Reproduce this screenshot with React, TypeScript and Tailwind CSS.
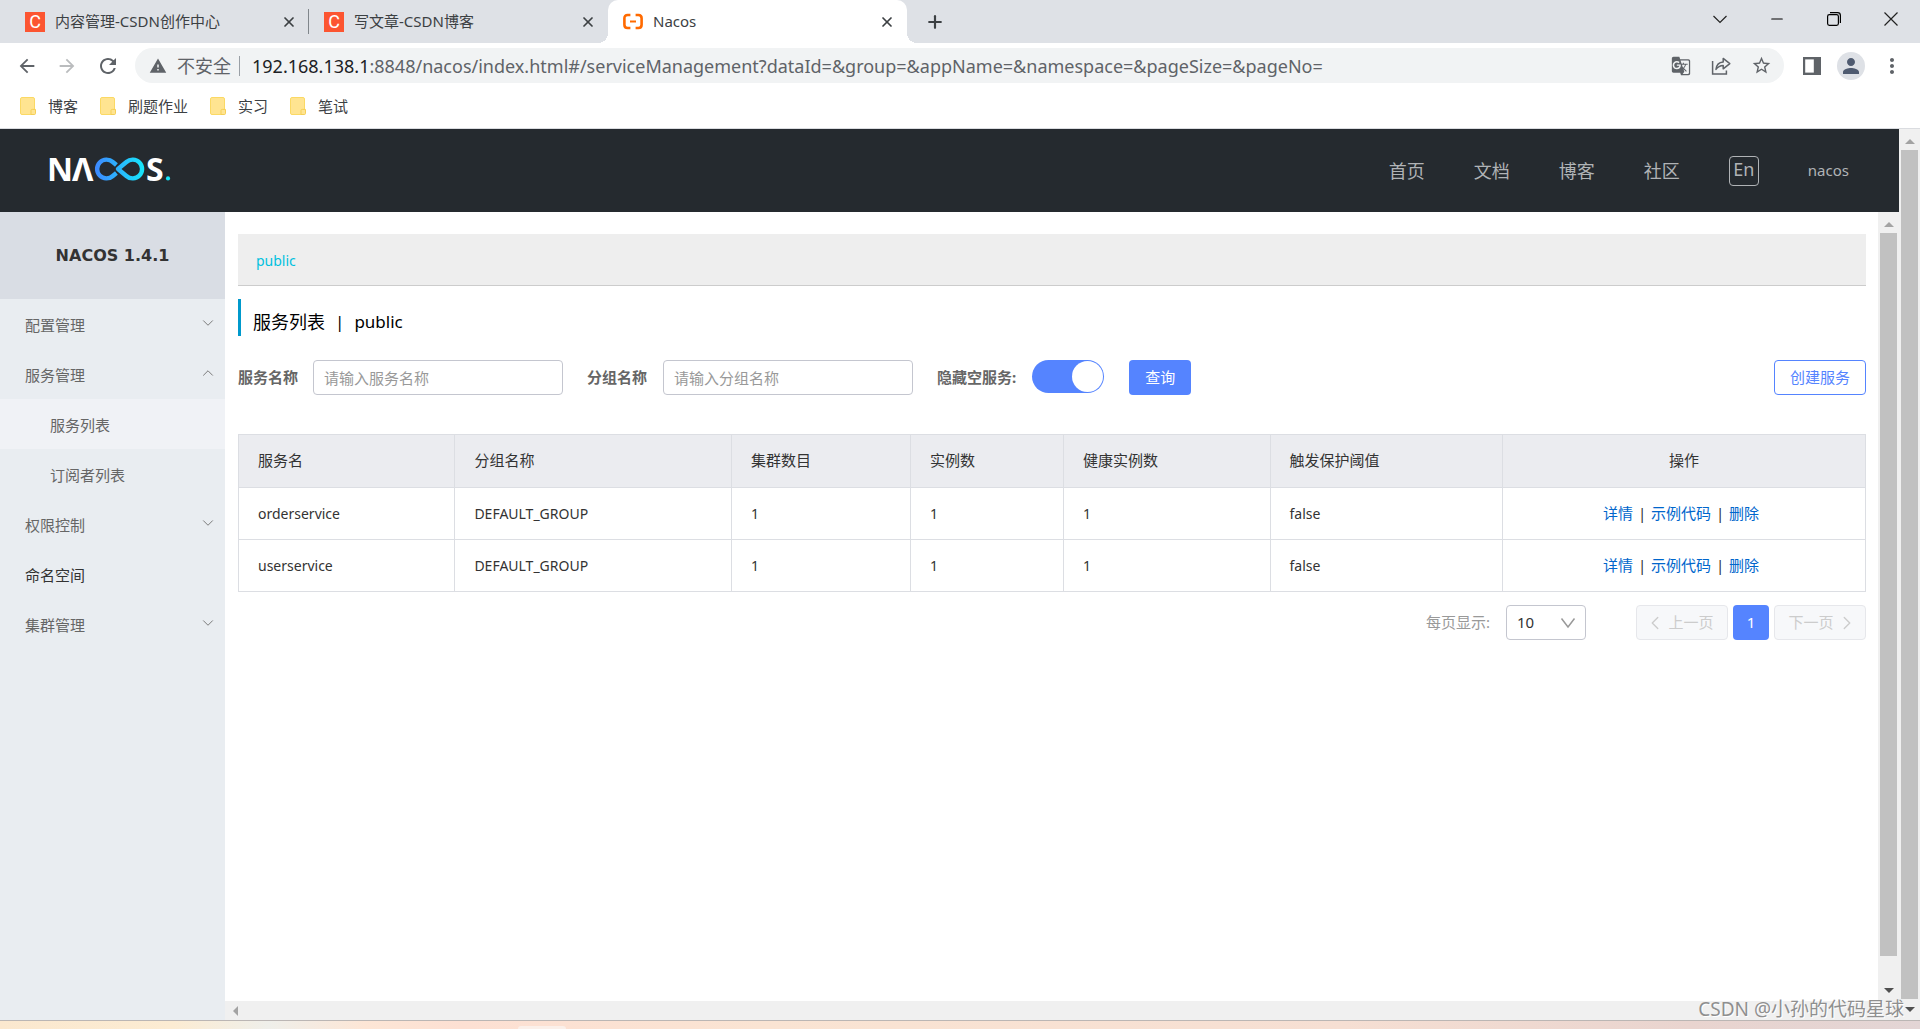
import type { ReactNode } from "react";
import { ChevronDown, ChevronLeft, ChevronRight, ChevronUp, Minus, Plus, X } from "lucide-react";
import {
  MdArrowBack,
  MdArrowForward,
  MdGTranslate,
  MdMoreVert,
  MdPerson,
  MdRefresh,
  MdStarBorder,
  MdWarning,
} from "react-icons/md";

type MenuItem = {
  label: string;
  state?: "open" | "closed";
  child?: boolean;
  active?: boolean;
  strong?: boolean;
};

const bookmarks = ["博客", "刷题作业", "实习", "笔试"];

const navLinks = ["首页", "文档", "博客", "社区"];

const menu: MenuItem[] = [
  { label: "配置管理", state: "closed" },
  { label: "服务管理", state: "open" },
  { label: "服务列表", child: true, active: true },
  { label: "订阅者列表", child: true },
  { label: "权限控制", state: "closed" },
  { label: "命名空间", strong: true },
  { label: "集群管理", state: "closed" },
];

const columns = [
  { title: "服务名", width: "w-[13.3%]" },
  { title: "分组名称", width: "w-[17%]" },
  { title: "集群数目", width: "w-[11%]" },
  { title: "实例数", width: "w-[9.4%]" },
  { title: "健康实例数", width: "w-[12.7%]" },
  { title: "触发保护阈值", width: "w-[14.3%]" },
];

const services = [
  { name: "orderservice", group: "DEFAULT_GROUP", clusters: 1, instances: 1, healthy: 1, threshold: "false" },
  { name: "userservice", group: "DEFAULT_GROUP", clusters: 1, instances: 1, healthy: 1, threshold: "false" },
];

const rowActions = ["详情", "示例代码", "删除"];

function CsdnIcon() {
  return (
    <span className="flex size-5 shrink-0 items-center justify-center bg-[#fc5531] font-['Roboto',sans-serif] text-lg leading-5 text-white">
      C
    </span>
  );
}

function NacosIcon() {
  return (
    <svg viewBox="0 0 20 20" className="size-5 shrink-0" fill="none" stroke="#ff6a00" strokeWidth="2.6">
      <path d="M7.4 3H4.6Q1.4 3 1.4 6.2V12.8Q1.4 16 4.6 16H7.4" />
      <path d="M12.6 3H15.4Q18.6 3 18.6 6.2V12.8Q18.6 16 15.4 16H12.6" />
      <path d="M7 9.5H13" strokeWidth="2" />
    </svg>
  );
}

type TabProps = { title: string; icon: ReactNode; active?: boolean };

function BrowserTab({ title, icon, active }: TabProps) {
  return (
    <div
      className={
        active
          ? "relative flex h-full w-[299px] items-center gap-2.5 rounded-t-[10px] bg-white pr-3 pl-[15px]"
          : "relative flex h-full w-[299px] items-center gap-2.5 pr-3 pl-[15px]"
      }
    >
      {active && (
        <>
          <span className="absolute bottom-0 -left-2.5 size-2.5 bg-[radial-gradient(circle_at_0_0,#dee1e6_10px,#fff_10px)]" />
          <span className="absolute -right-2.5 bottom-0 size-2.5 bg-[radial-gradient(circle_at_100%_0,#dee1e6_10px,#fff_10px)]" />
        </>
      )}
      {icon}
      <span className="flex-1 truncate text-[#3c4043]">{title}</span>
      <button type="button" aria-label={`关闭 ${title}`} className="text-[#3c4043]">
        <X size={16} strokeWidth={2.6} />
      </button>
    </div>
  );
}

function TabStrip() {
  return (
    <div className="flex h-[43px] items-center bg-[#dee1e6] pl-2.5 text-[15px]">
      <BrowserTab title="内容管理-CSDN创作中心" icon={<CsdnIcon />} />
      <span className="-ml-px h-[25px] w-px bg-[#80868b]" />
      <BrowserTab title="写文章-CSDN博客" icon={<CsdnIcon />} />
      <BrowserTab title="Nacos" icon={<NacosIcon />} active />
      <button type="button" aria-label="新标签页" className="ml-[18px] text-[#3c4043]">
        <Plus size={20} strokeWidth={2.6} />
      </button>
      <div className="mr-5 mb-1.5 ml-auto flex items-center gap-[39px]">
        <button type="button" aria-label="搜索标签页">
          <svg viewBox="0 0 18 18" className="size-[18px]" fill="none" stroke="#222" strokeWidth="1.2">
            <path d="M2.5 6 9 12.5 15.5 6" />
          </svg>
        </button>
        <button type="button" aria-label="最小化">
          <Minus size={18} strokeWidth={1.5} />
        </button>
        <button type="button" aria-label="还原">
          <svg viewBox="0 0 18 18" className="size-[18px]" fill="none" stroke="#000" strokeWidth="1.2">
            <rect x="2.6" y="4.6" width="10.8" height="10.8" rx="1.8" />
            <path d="M5 2.6H12.6Q15.4 2.6 15.4 5.4V13" />
          </svg>
        </button>
        <button type="button" aria-label="关闭">
          <svg viewBox="0 0 18 18" className="size-[18px]" stroke="#222" strokeWidth="1.2">
            <path d="M2.5 2.5 15.5 15.5M15.5 2.5 2.5 15.5" />
          </svg>
        </button>
      </div>
    </div>
  );
}

function AddressBar() {
  return (
    <div className="flex h-[45px] items-center bg-white pr-4 pl-4 text-[#5f6368]">
      <div className="flex items-center gap-[18px]">
        <button type="button" aria-label="返回">
          <MdArrowBack size={22} />
        </button>
        <button type="button" aria-label="前进" className="text-[#babcbe]">
          <MdArrowForward size={22} />
        </button>
        <button type="button" aria-label="重新加载">
          <MdRefresh size={24} />
        </button>
      </div>
      <div className="ml-[15px] flex h-[35px] flex-1 items-center rounded-full bg-[#f1f3f4] pr-3 pl-3.5">
        <MdWarning size={18} />
        <span className="ml-2.5 text-lg">不安全</span>
        <span className="mr-3 ml-2 h-5 w-px bg-[#9aa0a6]" />
        <div className="flex-1 text-lg whitespace-nowrap">
          <span className="text-[#202124]">192.168.138.1</span>
          :8848/nacos/index.html#/serviceManagement?dataId=&amp;group=&amp;appName=&amp;namespace=&amp;pageSize=&amp;pageNo=
        </div>
        <div className="flex items-center gap-5">
          <button type="button" aria-label="翻译">
            <MdGTranslate size={20} />
          </button>
          <button type="button" aria-label="分享">
            <svg viewBox="0 0 20 20" className="size-5" fill="none" stroke="currentColor" strokeWidth="1.5">
              <path d="M1.6 5V18H15.4V14.6" />
              <path d="M5 13.4Q5.6 6.6 12.2 6V2.4L18.8 7.6 12.2 12.8V9.6Q7.6 9.8 5 13.4Z" strokeLinejoin="round" />
            </svg>
          </button>
          <button type="button" aria-label="收藏">
            <MdStarBorder size={21} />
          </button>
        </div>
      </div>
      <div className="ml-[18px] flex items-center gap-[15px]">
        <button type="button" aria-label="侧边栏">
          <svg viewBox="0 0 20 20" className="size-5">
            <rect x="1" y="1" width="18" height="18" fill="#5f6368" />
            <rect x="3.2" y="3.4" width="8.6" height="13.2" fill="#fff" />
          </svg>
        </button>
        <button
          type="button"
          aria-label="用户"
          className="flex size-7 items-center justify-center rounded-full bg-[#dee1e6] text-[#4f5b70]"
        >
          <MdPerson size={24} />
        </button>
        <button type="button" aria-label="更多">
          <MdMoreVert size={24} />
        </button>
      </div>
    </div>
  );
}

function BookmarkBar() {
  return (
    <div className="flex h-[41px] items-center gap-[22px] border-b border-[#dadce0] bg-white pb-1 pl-5 text-[15px] text-[#3c4043]">
      {bookmarks.map((name) => (
        <a key={name} href="#" className="flex items-center gap-3">
          <svg viewBox="0 0 16 18" className="h-[18px] w-4">
            <rect x="0.5" y="0.5" width="14" height="17" rx="1.5" fill="#ffe491" stroke="#fbd964" />
            <path d="M11 17.5V13.5Q11 12.4 12.2 12.4H15.5V16.4Q15.5 17.5 14.4 17.5Z" fill="#ffe491" stroke="#f5cf56" />
          </svg>
          {name}
        </a>
      ))}
    </div>
  );
}

function Logo() {
  return (
    <svg viewBox="0 0 128 56" className="h-14 w-32 overflow-visible" role="img" aria-label="NACOS">
      <defs>
        <linearGradient id="loop" gradientUnits="userSpaceOnUse" x1="44" y1="0" x2="94" y2="0">
          <stop offset="0" stopColor="#3f86ff" />
          <stop offset="1" stopColor="#16e6fb" />
        </linearGradient>
      </defs>
      <g fill="#fff" fontFamily="Noto Sans, sans-serif" fontWeight="700" fontSize="32">
        <text x="-3" y="39.5">N</text>
        <text x="22" y="39.5">Λ</text>
        <text x="96" y="39.5">S</text>
      </g>
      <g fill="none" stroke="url(#loop)" strokeWidth="4.4">
        <path d="M66.4 24 62.8 21A9.4 9.4 0 1 0 62.8 35L66.4 32" />
        <path d="M68 28 76.4 21A9.4 9.4 0 1 1 76.4 35Z" strokeLinejoin="round" />
      </g>
      <circle cx="118" cy="37.4" r="2.1" fill="#16e6fb" />
    </svg>
  );
}

function SiteHeader() {
  return (
    <header className="flex h-[83px] items-center justify-between bg-[#252a2f] pr-[50px] pl-[50px] text-[#b0b3b6]">
      <a href="#" className="mb-1 flex">
        <Logo />
      </a>
      <nav className="flex items-center gap-[49px] text-lg">
        {navLinks.map((label) => (
          <a key={label} href="#">
            {label}
          </a>
        ))}
        <button
          type="button"
          className="flex size-[30px] items-start justify-center rounded-sm border border-[#b0b3b6] text-lg leading-6"
        >
          En
        </button>
        <a href="#" className="text-[15px]">
          nacos
        </a>
      </nav>
    </header>
  );
}

function Sidebar() {
  return (
    <aside className="w-[225px] shrink-0 bg-[#e9edf1]">
      <h1 className="flex h-[87px] items-center justify-center bg-[#d9dde4] font-['DejaVu_Sans',sans-serif] text-base font-bold text-[#333]">
        NACOS 1.4.1
      </h1>
      <ul className="text-[15px]">
        {menu.map((item) => (
          <li key={item.label} className={item.active ? "bg-[#f0f2f6]" : ""}>
            <a
              href="#"
              className={`flex h-[50px] items-center justify-between pt-0.5 pr-2 ${
                item.child ? "pl-[50px]" : "pl-[25px]"
              } ${item.strong ? "text-[#333]" : "text-[#666]"}`}
            >
              {item.label}
              {item.state === "closed" && <ChevronDown size={18} strokeWidth={1.3} className="mb-1 text-[#777]" />}
              {item.state === "open" && <ChevronUp size={18} strokeWidth={1.3} className="mb-1 text-[#777]" />}
            </a>
          </li>
        ))}
      </ul>
    </aside>
  );
}

function SearchForm() {
  const label = "text-[15px] font-bold text-[#666]";
  const field =
    "h-[35px] w-[250px] rounded-[4px] border border-[#c4c6cf] px-2.5 text-[15px] text-[#333] placeholder:text-[#999]";

  return (
    <form className="mt-6 flex items-center">
      <label htmlFor="service" className={label}>
        服务名称
      </label>
      <input id="service" type="text" placeholder="请输入服务名称" className={`ml-[15px] ${field}`} />
      <label htmlFor="group" className={`ml-6 ${label}`}>
        分组名称
      </label>
      <input id="group" type="text" placeholder="请输入分组名称" className={`ml-4 ${field}`} />
      <label htmlFor="hide-empty" className={`ml-6 ${label}`}>
        隐藏空服务:
      </label>
      <input
        id="hide-empty"
        type="checkbox"
        role="switch"
        defaultChecked
        className="mb-0.5 ml-4 flex h-[33px] w-[72px] appearance-none items-center rounded-full bg-[#5584ff] p-px before:ml-auto before:size-[31px] before:rounded-full before:bg-white"
      />
      <button type="button" className="ml-[25px] h-[35px] w-[62px] rounded-[4px] bg-[#5584ff] text-[15px] text-white">
        查询
      </button>
      <button
        type="button"
        className="ml-auto h-[35px] w-[92px] rounded-[4px] border border-[#5584ff] text-[15px] text-[#5584ff]"
      >
        创建服务
      </button>
    </form>
  );
}

function ServiceTable() {
  const cell = "border border-[#dcdee3] pl-[19px] text-left font-normal";

  return (
    <table className="mt-[39px] w-full table-fixed border-collapse text-sm text-[#333]">
      <thead className="bg-[#ebecf0] text-[15px]">
        <tr className="h-[53px]">
          {columns.map((col) => (
            <th key={col.title} className={`${cell} ${col.width}`}>
              {col.title}
            </th>
          ))}
          <th className="border border-[#dcdee3] font-normal">操作</th>
        </tr>
      </thead>
      <tbody>
        {services.map((row) => (
          <tr key={row.name} className="h-[52px]">
            <td className={cell}>{row.name}</td>
            <td className={cell}>{row.group}</td>
            <td className={cell}>{row.clusters}</td>
            <td className={cell}>{row.instances}</td>
            <td className={cell}>{row.healthy}</td>
            <td className={cell}>{row.threshold}</td>
            <td className="border border-[#dcdee3] pr-1.5">
              <div className="flex items-center justify-center text-[15px]">
                {rowActions.map((action, i) => (
                  <span key={action} className="flex items-center">
                    {i > 0 && <span className="w-[18px] text-center">|</span>}
                    <a href="#" className="text-[#0066cc]">
                      {action}
                    </a>
                  </span>
                ))}
              </div>
            </td>
          </tr>
        ))}
      </tbody>
    </table>
  );
}

function Pager() {
  const pageButton =
    "flex h-[35px] w-[92px] items-center justify-center gap-0.5 rounded-[4px] border border-[#e6e7eb] bg-[#f7f8fa] text-[#ccc]";

  return (
    <div className="mt-[13px] flex items-center justify-end text-[15px]">
      <label htmlFor="page-size" className="text-[#999]">
        每页显示:
      </label>
      <div className="relative ml-4">
        <select
          id="page-size"
          defaultValue="10"
          className="block h-[35px] w-20 appearance-none rounded-[4px] border border-[#c4c6cf] bg-white pl-2.5 text-[#333]"
        >
          <option>10</option>
          <option>20</option>
          <option>50</option>
        </select>
        <svg
          viewBox="0 0 16 16"
          className="pointer-events-none absolute top-2.5 right-2.5 size-4"
          fill="none"
          stroke="#999"
          strokeWidth="1.5"
        >
          <path d="M1.5 3.5 8 12 14.5 3.5" />
        </svg>
      </div>
      <div className="ml-[50px] flex gap-[5px]">
        <button type="button" disabled className={pageButton}>
          <ChevronLeft size={22} strokeWidth={1.5} className="-ml-1.5" />
          上一页
        </button>
        <button type="button" className="h-[35px] w-9 rounded-[4px] bg-[#5584ff] text-white">
          1
        </button>
        <button type="button" disabled className={pageButton}>
          下一页
          <ChevronRight size={22} strokeWidth={1.5} className="-mr-1.5" />
        </button>
      </div>
    </div>
  );
}

function VerticalScrollbar({ thumb }: { thumb: string }) {
  return (
    <div className="flex w-[21px] shrink-0 flex-col items-center bg-[#f0f0f0]">
      <svg viewBox="0 0 10 5" className="mt-2.5 mb-1.5 h-[5px] w-2.5 shrink-0 fill-[#a3a3a3]">
        <path d="M0 5 5 0 10 5Z" />
      </svg>
      <div className={`w-[17px] flex-1 bg-[#c1c1c1] ${thumb}`} />
      <svg viewBox="0 0 10 5" className="mb-2 h-[5px] w-2.5 shrink-0 fill-[#505050]">
        <path d="M0 0 5 5 10 0Z" />
      </svg>
    </div>
  );
}

function HorizontalScrollbar() {
  return (
    <div className="flex h-[19px] shrink-0 items-center bg-[#f0f0f0] pl-2">
      <svg viewBox="0 0 5 10" className="h-2.5 w-[5px] fill-[#a3a3a3]">
        <path d="M5 0 0 5 5 10Z" />
      </svg>
    </div>
  );
}

export default function App() {
  return (
    <div className="relative flex min-h-screen flex-col overflow-hidden bg-white font-['Noto_Sans','Noto_Sans_CJK_SC',sans-serif]">
      <TabStrip />
      <AddressBar />
      <BookmarkBar />

      <div className="flex flex-1">
        <div className="flex min-w-0 flex-1 flex-col">
          <SiteHeader />
          <div className="flex flex-1">
            <Sidebar />
            <div className="flex min-w-0 flex-1 flex-col">
              <div className="flex flex-1">
                <main className="min-w-0 flex-1 pt-[22px] pr-3 pl-[13px]">
                  <div className="flex h-[52px] items-center border-b border-[#ccc] bg-[#eee] pt-0.5 pl-[18px] text-sm">
                    <a href="#" className="text-[#00c1de]">
                      public
                    </a>
                  </div>
                  <h2 className="mt-[13px] flex h-[37px] items-center gap-2.5 border-l-[3px] border-[#0099cc] pt-2 pl-3 text-[17px] text-black">
                    <span className="text-lg">服务列表</span>
                    <span>|</span>
                    <span>public</span>
                  </h2>
                  <SearchForm />
                  <ServiceTable />
                  <Pager />
                </main>
                <VerticalScrollbar thumb="mb-8" />
              </div>
              <HorizontalScrollbar />
            </div>
          </div>
        </div>
        <VerticalScrollbar thumb="mb-2" />
      </div>

      <div className="h-[9px] border-t border-[#bbb6b4] bg-[linear-gradient(90deg,#fbe8cf_0%,#fcecd3_9%,#efefea_14%,#fde6d6_19%,#fde0d3_24%,#fae4d3_40%,#f6dfd3_70%,#e9d4cf_88%,#e3d5d5_100%)]">
        <div className="mx-auto w-[46%]">
          <div className="mt-[5px] h-[3px] w-12 rounded-t-sm bg-[#fbf0ea]" />
        </div>
      </div>

      <p className="absolute right-4 bottom-2 text-[19px] leading-6 text-[#8f8f8f] [text-shadow:1px_1px_0_#fff]">
        CSDN @小孙的代码星球
      </p>
    </div>
  );
}
